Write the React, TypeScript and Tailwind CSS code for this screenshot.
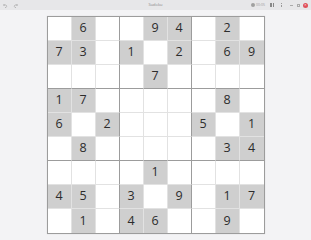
import React from "react";

const grid: string[] = [
  ".6..94.2.",
  "73.1.2.69",
  "....7....",
  "17.....8.",
  "6.2...5.1",
  ".8.....34",
  "....1....",
  "45.3.9.17",
  ".1.46..9.",
];

function Cell({ v, r, c }: { v: string; r: number; c: number }) {
  const given = v !== ".";
  const rightThick = c === 2 || c === 5;
  const bottomThick = r === 2 || r === 5;
  const cls = [
    "w-[24px] h-[24px] flex items-center justify-center text-[12.5px] text-[#2c2c2c]",
    given ? "bg-[#cfcfcf]" : "bg-white",
    c < 8 ? "border-r" : "",
    r < 8 ? "border-b" : "",
    c < 8 ? (rightThick ? "border-r-[#9c9c9c]" : "border-r-[#e2e2e2]") : "",
    r < 8 ? (bottomThick ? "border-b-[#9c9c9c]" : "border-b-[#e2e2e2]") : "",
  ].join(" ");
  return <div className={cls}>{given ? v : ""}</div>;
}

export default function App() {
  return (
    <div
      className="w-[311px] h-[240px] bg-[#f3f3f5] flex flex-col overflow-hidden"
      style={{ fontFamily: '"Open Sans", "Noto Sans", sans-serif' }}
    >
      <div className="h-[10px] bg-[#e7e7e9] flex items-center relative px-[3px] text-[#9a9a9a]">
        <div className="flex items-center gap-[5px]">
          <svg width="5" height="5" viewBox="0 0 10 10" fill="none" stroke="#a8a8a8" strokeWidth="1.4">
            <path d="M3 2 L1 4 L3 6 M1 4 H6 A3 3 0 0 1 6 9 H4" />
          </svg>
          <svg width="5" height="5" viewBox="0 0 10 10" fill="none" stroke="#a8a8a8" strokeWidth="1.4">
            <path d="M7 2 L9 4 L7 6 M9 4 H4 A3 3 0 0 0 4 9 H6" />
          </svg>
        </div>
        <div className="absolute left-0 right-0 top-0 h-[10px] flex items-center justify-center text-[4px] text-[#8a8a8a] pointer-events-none">
          Sudoku
        </div>
        <div className="ml-auto flex items-center text-[3.5px] text-[#999]">
          <div className="flex items-center gap-[1px]">
            <div className="w-[4px] h-[4px] rounded-full bg-[#a0a0a0]" />
            <span>00:05</span>
          </div>
          <div className="flex gap-[1px] ml-[5px]">
            <div className="w-[1.5px] h-[4px] bg-[#888]" />
            <div className="w-[1.5px] h-[4px] bg-[#888]" />
          </div>
          <div className="flex flex-col gap-[0.5px] ml-[7px]">
            <div className="w-[1px] h-[1px] bg-[#999]" />
            <div className="w-[1px] h-[1px] bg-[#999]" />
            <div className="w-[1px] h-[1px] bg-[#999]" />
          </div>
          <div className="w-[3px] h-[1px] bg-[#aaa] ml-[8px]" />
          <div className="w-[3px] h-[3px] border border-[#aaa] ml-[4px]" />
          <div className="w-[5px] h-[5px] rounded-full bg-[#e0505a] ml-[3px] flex items-center justify-center">
            <div className="text-white text-[4px] leading-none">×</div>
          </div>
        </div>
      </div>
      <div className="flex justify-center pt-[6px]">
        <div className="border border-[#9c9c9c] shadow-[0_0_1px_rgba(0,0,0,0.15)] grid grid-cols-[repeat(9,24px)]">
          {grid.map((row, r) =>
            row.split("").map((v, c) => <Cell key={`${r}-${c}`} v={v} r={r} c={c} />)
          )}
        </div>
      </div>
    </div>
  );
}
